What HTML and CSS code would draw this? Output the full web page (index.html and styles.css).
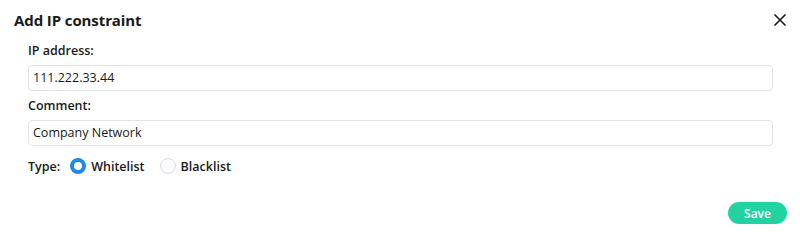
FILE: index.html
```html
<!DOCTYPE html>
<html>
<head>
<meta charset="utf-8">
<link rel="stylesheet" href="styles.css">
</head>
<body>
<div class="dialog">
  <div class="header">
    <h1 class="title">Add IP constraint</h1>
    <button class="close" aria-label="Close">
      <svg width="14" height="14" viewBox="0 0 14 14"><path d="M1.5 1.5L12.5 12.5M12.5 1.5L1.5 12.5" stroke="#1a1a1a" stroke-width="1.6" fill="none"/></svg>
    </button>
  </div>
  <div class="body">
    <label class="label">IP address:</label>
    <div class="input">111.222.33.44</div>
    <label class="label">Comment:</label>
    <div class="input">Company Network</div>
    <div class="type-row">
      <span class="type-label">Type:</span>
      <span class="radio checked"></span><span class="radio-text">Whitelist</span>
      <span class="radio"></span><span class="radio-text">Blacklist</span>
    </div>
  </div>
  <div class="footer">
    <button class="save">Save</button>
  </div>
</div>
</body>
</html>
```
FILE: styles.css
```css
html, body { margin: 0; padding: 0; background: #fff; }
body { font-family: "Open Sans", "Inter", sans-serif; color: #1a1a1a; width: 800px; height: 240px; overflow: hidden; }
.dialog { display: flex; flex-direction: column; height: 240px; }
.header { display: flex; align-items: center; justify-content: space-between; padding: 10px 13px 0 14px; height: 20px; }
.title { margin: 0; font-size: 15px; font-weight: 700; letter-spacing: -0.1px; }
.close { border: 0; background: none; padding: 0; width: 14px; height: 14px; display: flex; }
.body { padding: 11px 27px 0 28px; display: flex; flex-direction: column; }
.label { font-size: 12.5px; font-weight: 600; height: 20px; line-height: 20px; margin-bottom: 4px; }
.input { height: 24px; line-height: 24px; border: 1px solid #e3e3ec; border-radius: 4px; padding: 0 4px; font-size: 12.5px; margin-bottom: 5px; }
.type-row { display: flex; align-items: center; height: 30px; font-size: 12.5px; font-weight: 600; }
.type-label { margin-right: 10px; }
.radio { width: 16px; height: 16px; border-radius: 50%; box-sizing: border-box; border: 1px solid #dcdce6; background: #fafafc; margin-right: 5px; }
.radio.checked { border: 4px solid #1e88e5; background: #fff; }
.radio-text { margin-right: 15px; }
.footer { margin-top: auto; display: flex; justify-content: flex-end; padding: 0 13px 16px 0; }
.save { border: 0; background: #22d3a1; color: #fff; font-family: inherit; font-weight: 600; font-size: 12px; width: 59px; height: 22px; border-radius: 11px; padding: 0; }
```
